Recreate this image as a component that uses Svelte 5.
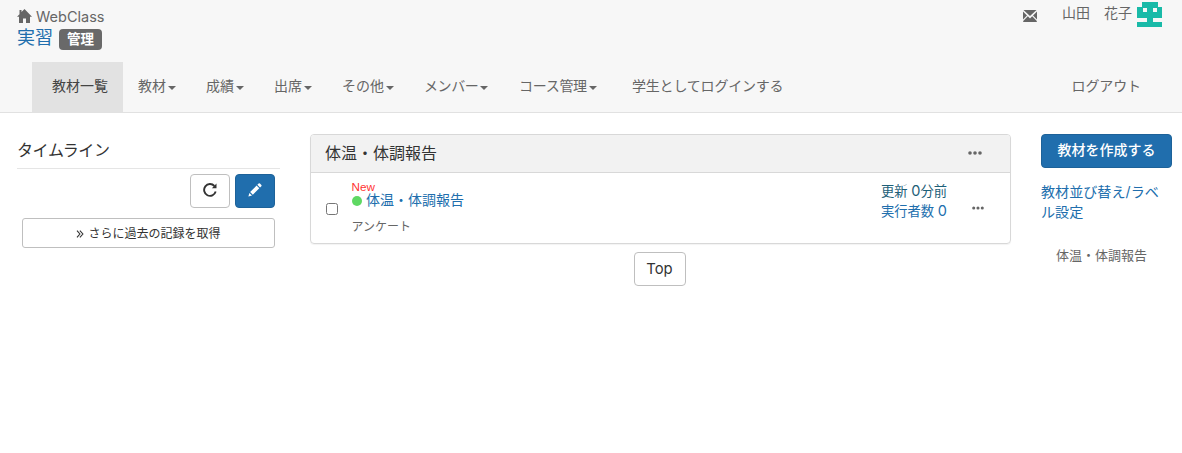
<script lang="ts">
	type NavItem = {
		label: string;
		menu: boolean;
		kind?: string;
	};

	const navItems: NavItem[] = [
		{ label: '教材一覧', menu: false, kind: 'active' },
		{ label: '教材', menu: true },
		{ label: '成績', menu: true },
		{ label: '出席', menu: true },
		{ label: 'その他', menu: true },
		{ label: 'メンバー', menu: true, kind: 'member' },
		{ label: 'コース管理', menu: true, kind: 'course' },
		{ label: '学生としてログインする', menu: false, kind: 'student' }
	];

	let checked = $state(false);
</script>

{#snippet dots(size: number)}
	<svg class="dots" width={size} height="4" viewBox="0 0 14 4">
		<circle cx="2" cy="2" r="1.8" />
		<circle cx="7" cy="2" r="1.8" />
		<circle cx="12" cy="2" r="1.8" />
	</svg>
{/snippet}

<header>
	<div class="top">
		<div class="brand">
			<a class="home" href="#home">
				<svg width="15" height="14" viewBox="0 0 15 14">
					<path d="M7.5 0 15 7.8h-2V14H9V9.5H6V14H2V7.8H0L2.5 5.2V1h2v2.1z" />
				</svg>
				<span>WebClass</span>
			</a>
			<div class="course-name">
				<a href="#course">実習</a>
				<span class="badge">管理</span>
			</div>
		</div>
		<div class="user">
			<svg class="mail" width="14" height="12" viewBox="0 0 14 12">
				<path d="M.5 0h13L7 6zM0 1.5 4 5.5 0 9.6zM14 1.5v8.1l-4-4.1zM4.8 6.3 7 8.4l2.2-2.1 4.6 4.7V12H.2v-1z" />
			</svg>
			<span class="user-name">山田　花子</span>
			<svg class="avatar" width="25" height="25" viewBox="0 0 25 25" shape-rendering="crispEdges">
				<path fill-rule="evenodd" d="M5 0h16v5h4v11h-9v4h9v5H0v-5h10v-4H0V5h5zM6 6v4h4V6zM16 6v4h4V6z" />
			</svg>
		</div>
	</div>
	<nav>
		{#each navItems as item}
			<a class="nav-item {item.kind ?? ''}" href="#nav">
				<span>{item.label}</span>
				{#if item.menu}
					<i class="caret"></i>
				{/if}
			</a>
		{/each}
		<a class="nav-item logout" href="#logout">ログアウト</a>
	</nav>
</header>

<main>
	<aside class="timeline">
		<h4>タイムライン</h4>
		<div class="tools">
			<button class="btn icon" aria-label="更新">
				<svg width="14" height="14" viewBox="0 0 14 14">
					<path d="M12.7 8.6A5.9 5.9 0 1 1 11.4 3" fill="none" stroke="#333" stroke-width="1.9" />
					<path d="M13.5 .6v4.6H8.9z" fill="#333" />
				</svg>
			</button>
			<button class="btn icon primary" aria-label="書き込む">
				<svg width="14" height="14" viewBox="0 0 15 15" fill="#fff">
					<path d="M.4 14.4 1.5 10.6 4.3 13.3zM2.3 9.7 9.2 2.8l2.9 2.9-6.9 6.9zM10 2 11.4.6q.7-.6 1.4 0l1.5 1.5q.6.6 0 1.4L12.9 4.9z" />
				</svg>
			</button>
		</div>
		<button class="btn more">
			<svg width="8" height="8" viewBox="0 0 8 8" fill="none" stroke="#333" stroke-width="1.1">
				<path d="M1 .6 3.9 4 1 7.4M3.9.6 6.9 4 3.9 7.4" />
			</svg>
			<span>さらに過去の記録を取得</span>
		</button>
	</aside>

	<section class="contents">
		<div class="panel">
			<div class="panel-heading">
				<h4>体温・体調報告</h4>
				{@render dots(14)}
			</div>
			<div class="panel-body">
				<input type="checkbox" aria-label="体温・体調報告" bind:checked />
				<div class="item">
					<div class="new">New</div>
					<div class="item-title"><i class="status"></i><a href="#item">体温・体調報告</a></div>
					<div class="category">アンケート</div>
				</div>
				<div class="info">
					<a class="updated" href="#log">更新 <span>0</span>分前</a>
					<a href="#users">実行者数 <span>0</span></a>
				</div>
				{@render dots(12)}
			</div>
		</div>
		<button class="btn to-top">Top</button>
	</section>

	<aside class="side">
		<button class="btn primary create">教材を作成する</button>
		<a class="sort" href="#sort">教材並び替え/ラベル設定</a>
		<a class="label-link" href="#label">体温・体調報告</a>
	</aside>
</main>

<style>
	:global(body) {
		background: #fff;
		color: #333;
		font-family: Inter, 'Noto Sans CJK JP', sans-serif;
		font-size: 14px;
		line-height: 20px;
	}

	* {
		box-sizing: border-box;
	}

	a {
		color: #206ead;
		text-decoration: none;
		white-space: nowrap;
	}

	svg {
		display: block;
		flex: none;
	}

	h4 {
		margin: 0;
		font-size: 16px;
		font-weight: 400;
	}

	header {
		height: 113px;
		background: #f7f7f7;
		border-bottom: 1px solid #e1e1e1;
	}

	.top {
		display: flex;
		justify-content: space-between;
		height: 62px;
		padding: 0 20px 0 17px;
	}

	.home {
		display: flex;
		gap: 4px;
		margin-top: 7px;
		color: #666;
		font-size: 14.5px;
		fill: #666;
	}

	.home svg {
		margin-top: 2px;
	}

	.course-name {
		display: flex;
		gap: 6px;
		font-size: 18px;
	}

	.course-name a {
		padding-top: 1px;
	}

	.badge {
		height: 21px;
		margin-top: 2px;
		padding: 0 8px;
		border-radius: 4px;
		background: #696969;
		color: #fff;
		font-size: 13.5px;
		font-weight: 700;
		line-height: 20px;
	}

	.user {
		display: flex;
		padding-top: 2px;
		color: #666;
	}

	.mail {
		margin: 8px 25px 0 0;
		fill: #666;
	}

	.user-name {
		margin-right: 5px;
		padding-top: 1px;
		white-space: pre;
	}

	.avatar {
		fill: #19baa8;
	}

	nav {
		display: flex;
		height: 50px;
		padding: 0 26px 0 32px;
	}

	.nav-item {
		display: flex;
		align-items: center;
		padding: 0 15px 2px;
		color: #666;
	}

	.nav-item.active {
		padding-left: 20px;
		background: #e2e2e2;
		color: #444;
	}

	.nav-item.member {
		width: 95px;
		letter-spacing: -0.4px;
	}

	.nav-item.course {
		width: 108px;
		letter-spacing: -0.3px;
	}

	.nav-item.student {
		padding-left: 20px;
		letter-spacing: -0.2px;
	}

	.nav-item.logout {
		margin-left: auto;
		letter-spacing: -0.1px;
	}

	.caret {
		margin: 3px 0 0 2px;
		border: 4px solid transparent;
		border-top-color: #666;
		border-bottom: 0;
	}

	main {
		display: flex;
		align-items: flex-start;
		padding: 21px 10px 0 17px;
	}

	.timeline {
		width: 263px;
		margin-right: 30px;
	}

	.timeline h4 {
		height: 35px;
		padding-top: 6px;
		border-bottom: 1px solid #e5e5e5;
		letter-spacing: -0.4px;
	}

	.btn {
		display: flex;
		align-items: center;
		justify-content: center;
		height: 34px;
		padding: 0;
		border: 1px solid #bfbfbf;
		border-radius: 4px;
		background: #fff;
		color: #333;
		font: inherit;
	}

	.btn.primary {
		border-color: #1d6299;
		background: #206ead;
		color: #fff;
	}

	.tools {
		display: flex;
		justify-content: flex-end;
		gap: 5px;
		padding: 5px 5px 0 0;
		margin-bottom: 10px;
	}

	.icon {
		width: 40px;
	}

	.icon svg {
		margin-top: -2px;
	}

	.icon.primary svg {
		margin-right: 1px;
	}

	.btn.more {
		gap: 4px;
		width: 253px;
		height: 30px;
		margin-left: 5px;
		padding: 1px 0 0;
		border-radius: 3px;
		font-size: 12px;
	}

	.more svg {
		margin-top: 1px;
	}

	.contents {
		display: flex;
		flex-direction: column;
		align-items: center;
		width: 701px;
	}

	.panel {
		width: 100%;
		margin-bottom: 8px;
		border: 1px solid #d8d8d8;
		border-radius: 4px;
		box-shadow: 0 1px 1px rgba(0, 0, 0, 0.05);
	}

	.panel-heading {
		display: flex;
		align-items: center;
		justify-content: space-between;
		height: 38px;
		padding: 0 28px 1px 14px;
		border-bottom: 1px solid #d8d8d8;
		border-radius: 3px 3px 0 0;
		background: #f2f2f2;
	}

	.dots {
		fill: #666;
	}

	.panel-body {
		display: flex;
		height: 70px;
		padding: 0 26px 0 15px;
	}

	input {
		width: 12px;
		height: 12px;
		margin: 30px 13.5px 0 0;
	}

	.new {
		height: 14px;
		margin-top: 6px;
		color: #f33;
		font: 11.7px/16px 'Liberation Sans', sans-serif;
	}

	.item-title {
		display: flex;
		align-items: center;
		gap: 4.5px;
		height: 14px;
	}

	.status {
		width: 10px;
		height: 10px;
		margin-top: 2px;
		border-radius: 50%;
		background: #5fd863;
	}

	.category {
		margin-top: 10px;
		color: #666;
		font-size: 12px;
	}

	.info {
		display: flex;
		flex-direction: column;
		margin: 8px 25px 0 auto;
		font-size: 13.3px;
	}

	.info span {
		font-size: 14.5px;
		line-height: 1;
	}

	.info .updated {
		color: #1d6078;
	}

	.panel-body .dots {
		margin-top: 33px;
	}

	.to-top {
		width: 52px;
		margin-right: 2px;
		font-size: 14.8px;
	}

	.side {
		width: 131px;
		margin-left: 30px;
	}

	.create {
		width: 131px;
		padding-bottom: 2px;
		font-weight: 500;
	}

	.sort {
		display: block;
		margin: 14px 0 23px;
		font-size: 14.1px;
		white-space: normal;
		word-break: break-all;
	}

	.label-link {
		display: block;
		margin-left: 15px;
		color: #666;
		font-size: 13px;
	}
</style>
